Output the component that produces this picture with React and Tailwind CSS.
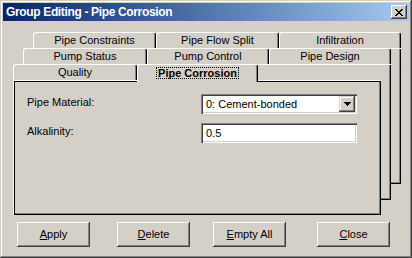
import React from "react";

function CloseGlyph() {
  return (
    <svg width="8" height="7" viewBox="0 0 8 7" shapeRendering="crispEdges">
      <path
        fill="#000"
        d="M0 0h2v1H0zM6 0h2v1H6zM1 1h2v1H1zM5 1h2v1H5zM2 2h4v1H2zM3 3h2v1H3zM2 4h4v1H2zM1 5h2v1H1zM5 5h2v1H5zM0 6h2v1H0zM6 6h2v1H6z"
      />
    </svg>
  );
}

function DownArrow() {
  return (
    <svg width="7" height="4" viewBox="0 0 7 4" shapeRendering="crispEdges">
      <path fill="#000" d="M0 0h7v1H0zM1 1h5v1H1zM2 2h3v1H2zM3 3h1v1H3z" />
    </svg>
  );
}

export default function App() {
  return (
    <div className="w-[412px] h-[258px] bg-[#d4d0c8] font-['Liberation_Sans',Arial,sans-serif] text-[11px] text-black shadow-[inset_-1px_-1px_#404040,inset_1px_1px_#d4d0c8,inset_-2px_-2px_#808080,inset_2px_2px_#ffffff] flex flex-col overflow-hidden select-none">
      {/* Title bar */}
      <div className="mx-[3px] mt-[3px] h-[18px] flex items-center bg-linear-to-r from-[#0a246a] to-[#a6caf0] pl-[3px] pr-[2px]">
        <span className="font-bold text-[12px] tracking-[-0.35px] text-white leading-none">
          Group Editing - Pipe Corrosion
        </span>
        <div className="ml-auto w-[16px] h-[14px] bg-[#d4d0c8] flex items-center justify-center shadow-[inset_-1px_-1px_#404040,inset_1px_1px_#ffffff,inset_-2px_-2px_#808080]">
          <CloseGlyph />
        </div>
      </div>

      {/* Tab stack */}
      <div className="relative h-[183px] mt-[11px]">
        {/* Back layer: row 1 */}
        <div className="absolute left-[33px] top-0 w-[368px] flex flex-col">
          <div className="flex h-[16px]">
            <div className="w-[123px] h-[16px] flex items-center justify-center bg-[#d4d0c8] border-t border-l border-r border-t-white border-l-white border-r-black rounded-t-[3px] shadow-[inset_-1px_0_#808080]">
              Pipe Constraints
            </div>
            <div className="w-[123px] h-[16px] flex items-center justify-center bg-[#d4d0c8] border-t border-l border-r border-t-white border-l-white border-r-black rounded-t-[3px] shadow-[inset_-1px_0_#808080]">
              Pipe Flow Split
            </div>
            <div className="w-[122px] h-[16px] flex items-center justify-center bg-[#d4d0c8] border-t border-l border-r border-t-white border-l-white border-r-black rounded-t-[3px] shadow-[inset_-1px_0_#808080]">
              Infiltration
            </div>
          </div>
          <div className="h-[136px] bg-[#d4d0c8] shadow-[inset_1px_1px_#ffffff,inset_-1px_-1px_#000000,inset_-2px_-2px_#808080]" />
        </div>

        {/* Middle layer: row 2 */}
        <div className="absolute left-[23px] top-[16px] w-[368px] flex flex-col">
          <div className="flex h-[16px]">
            <div className="w-[124px] h-[16px] flex items-center justify-center bg-[#d4d0c8] border-t border-l border-r border-t-white border-l-white border-r-black rounded-t-[3px] shadow-[inset_-1px_0_#808080]">
              Pump Status
            </div>
            <div className="w-[122px] h-[16px] flex items-center justify-center bg-[#d4d0c8] border-t border-l border-r border-t-white border-l-white border-r-black rounded-t-[3px] shadow-[inset_-1px_0_#808080]">
              Pump Control
            </div>
            <div className="w-[122px] h-[16px] flex items-center justify-center bg-[#d4d0c8] border-t border-l border-r border-t-white border-l-white border-r-black rounded-t-[3px] shadow-[inset_-1px_0_#808080]">
              Pipe Design
            </div>
          </div>
          <div className="h-[136px] bg-[#d4d0c8] shadow-[inset_1px_1px_#ffffff,inset_-1px_-1px_#000000,inset_-2px_-2px_#808080]" />
        </div>

        {/* Front layer: row 3 */}
        <div className="absolute left-[13px] top-[32px] w-[368px] flex flex-col">
          <div className="flex h-[16px] items-start">
            <div className="w-[124px] h-[16px] flex items-center justify-center bg-[#d4d0c8] border-t border-l border-r border-t-white border-l-white border-r-black rounded-t-[3px] shadow-[inset_-1px_0_#808080]">
              Quality
            </div>
            <div className="relative z-10 w-[121px] h-[18px] pb-[2px] flex items-center justify-center bg-[#d4d0c8] border-t border-l border-r border-t-white border-l-white border-r-black rounded-t-[3px] shadow-[inset_-1px_0_#808080]">
              <span className="font-bold border border-dotted border-black px-[1px] leading-[10px]">
                Pipe Corrosion
              </span>
            </div>
          </div>
          <div className="h-[135px] bg-[#d4d0c8] shadow-[inset_1px_1px_#ffffff,inset_2px_2px_#000000,inset_-1px_-1px_#000000,inset_-2px_-2px_#808080] flex flex-col pt-[14px] gap-[8px]">
            <div className="flex items-center">
              <span className="w-[188px] pl-[14px] pb-[4px]">Pipe Material:</span>
              <div className="w-[156px] h-[20px] bg-white p-[2px] flex items-center shadow-[inset_1px_1px_#808080,inset_2px_2px_#404040,inset_-1px_-1px_#ffffff,inset_-2px_-2px_#d4d0c8]">
                <span className="flex-1 pl-[3px]">0: Cement-bonded</span>
                <div className="w-[16px] h-[16px] bg-[#d4d0c8] flex items-center justify-center shadow-[inset_-1px_-1px_#404040,inset_1px_1px_#d4d0c8,inset_-2px_-2px_#808080,inset_2px_2px_#ffffff]">
                  <DownArrow />
                </div>
              </div>
            </div>
            <div className="flex items-center">
              <span className="w-[188px] pl-[14px] pb-[4px]">Alkalinity:</span>
              <div className="w-[156px] h-[20px] bg-white p-[2px] flex items-center shadow-[inset_1px_1px_#808080,inset_2px_2px_#404040,inset_-1px_-1px_#ffffff,inset_-2px_-2px_#d4d0c8]">
                <span className="flex-1 pl-[3px]">0.5</span>
              </div>
            </div>
          </div>
        </div>
      </div>

      {/* Buttons */}
      <div className="flex mt-[7px]">
        <div className="ml-[17px] w-[73px] h-[25px] flex items-center justify-center bg-[#d4d0c8] shadow-[inset_-1px_-1px_#404040,inset_1px_1px_#ffffff,inset_-2px_-2px_#808080]">
          <span><span className="underline">A</span>pply</span>
        </div>
        <div className="ml-[27px] w-[73px] h-[25px] flex items-center justify-center bg-[#d4d0c8] shadow-[inset_-1px_-1px_#404040,inset_1px_1px_#ffffff,inset_-2px_-2px_#808080]">
          <span><span className="underline">D</span>elete</span>
        </div>
        <div className="ml-[23px] w-[73px] h-[25px] flex items-center justify-center bg-[#d4d0c8] shadow-[inset_-1px_-1px_#404040,inset_1px_1px_#ffffff,inset_-2px_-2px_#808080]">
          <span><span className="underline">E</span>mpty All</span>
        </div>
        <div className="ml-[31px] w-[73px] h-[25px] flex items-center justify-center bg-[#d4d0c8] shadow-[inset_-1px_-1px_#404040,inset_1px_1px_#ffffff,inset_-2px_-2px_#808080]">
          <span><span className="underline">C</span>lose</span>
        </div>
      </div>
    </div>
  );
}
